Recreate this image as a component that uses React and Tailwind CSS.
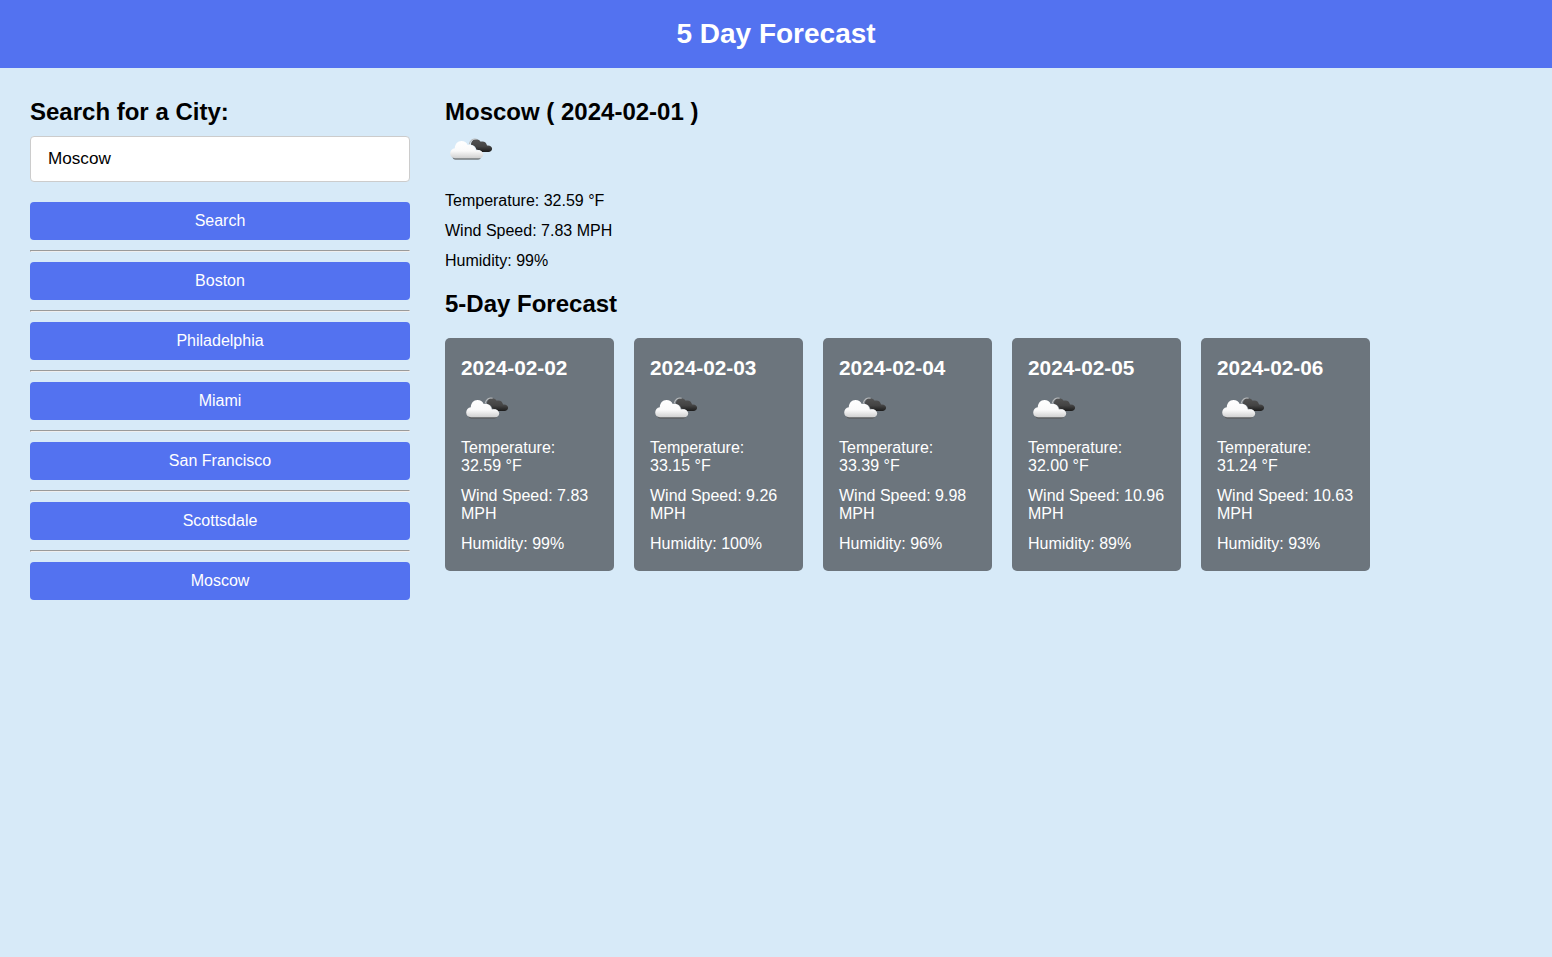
import React from "react";

const cities = ["Boston", "Philadelphia", "Miami", "San Francisco", "Scottsdale", "Moscow"];

const days = [
  { date: "2024-02-02", temp: "32.59", wind: "7.83", humidity: "99" },
  { date: "2024-02-03", temp: "33.15", wind: "9.26", humidity: "100" },
  { date: "2024-02-04", temp: "33.39", wind: "9.98", humidity: "96" },
  { date: "2024-02-05", temp: "32.00", wind: "10.96", humidity: "89" },
  { date: "2024-02-06", temp: "31.24", wind: "10.63", humidity: "93" },
];

function CloudIcon({ id }) {
  const front =
    "M10 34.3C7.2 34.3 5.2 32.4 5.2 29.6C5.2 26.9 7 24.7 9.8 24.3C9.8 20.1 12.6 17 16.4 17C19.4 17 21.6 18.6 22.7 20.9C27 20 30.2 22.4 30.9 26.4C35.2 25.4 38.2 27.6 38.2 30.6C38.2 32.8 36.4 34.3 34.2 34.3Z";
  return (
    <svg viewBox="0 0 50 50" className="block size-[50px]" aria-hidden="true">
      <defs>
        <linearGradient id={`${id}-front`} x1="0" y1="17" x2="0" y2="35" gradientUnits="userSpaceOnUse">
          <stop offset="0" stopColor="#ffffff" />
          <stop offset="0.55" stopColor="#fafafa" />
          <stop offset="1" stopColor="#cccccc" />
        </linearGradient>
        <linearGradient id={`${id}-back`} x1="0" y1="14" x2="0" y2="28" gradientUnits="userSpaceOnUse">
          <stop offset="0" stopColor="#555555" />
          <stop offset="0.6" stopColor="#444444" />
          <stop offset="1" stopColor="#1c1c1c" />
        </linearGradient>
      </defs>
      <path
        d="M26 20.8C26 17.3 28.3 15.2 31 15.2C33.2 15.2 34.9 16.1 35.7 17.7C39 16.9 41.6 18.6 42 21.6C45 21.2 47.1 22.6 47.1 24.8C47.1 26.8 45.5 28 43.4 28H37C35.5 26.3 33.5 25.5 31.5 25.7C30.7 22.9 28.8 21.1 26 20.8Z"
        fill={`url(#${id}-back)`}
      />
      <path d="M24.4 20.1C24.9 16.5 28 14.3 31.6 15.3" fill="none" stroke="#b9bbbc" strokeWidth="1.1" />
      <path d="M7.5 32.5H36C36 34.6 34.5 35.7 33 35.7H10.6C8.9 35.7 7.5 34.6 7.5 32.5Z" fill="#555555" fillOpacity="0.75" />
      <path d={front} fill={`url(#${id}-front)`} />
    </svg>
  );
}

function ActionButton({ children }) {
  return (
    <button type="button" className="block h-[38px] w-full rounded bg-[#5372f0] text-center leading-[18px] text-white">
      {children}
    </button>
  );
}

function ForecastCard({ day }) {
  return (
    <li className="h-[233px] w-[169px] rounded-[5px] bg-[#6c757d] px-4 pt-[18px] text-white">
      <h3 className="text-[20.8px] leading-6 font-bold">{day.date}</h3>
      <div className="mt-[3px]">
        <CloudIcon id={day.date} />
      </div>
      <div className="mt-1.5 flex flex-col gap-3 leading-[18px]">
        <p>Temperature: {day.temp} °F</p>
        <p>Wind Speed: {day.wind} MPH</p>
        <p>Humidity: {day.humidity}%</p>
      </div>
    </li>
  );
}

export default function App() {
  return (
    <div className="min-h-screen bg-[#d7eaf8] font-['Liberation_Sans',Arial,sans-serif] text-base text-black">
      <header className="bg-[#5372f0] py-[18px] text-center">
        <h1 className="text-[28px] leading-8 font-bold text-white">5 Day Forecast</h1>
      </header>
      <main className="flex gap-[35px] p-[30px]">
        <section className="w-[380px] shrink-0">
          <h2 className="text-2xl leading-7 font-bold">Search for a City:</h2>
          <input
            type="text"
            defaultValue="Moscow"
            aria-label="City"
            className="mt-2.5 mb-5 block h-[46px] w-full rounded border border-[#cccccc] bg-white px-[17px] text-[17.12px] outline-none"
          />
          <ActionButton>Search</ActionButton>
          {cities.map((city) => (
            <React.Fragment key={city}>
              <hr className="my-2.5 h-0.5 border border-t-[#9a9a9a] border-r-[#eeeeee] border-b-[#eeeeee] border-l-[#9a9a9a]" />
              <ActionButton>{city}</ActionButton>
            </React.Fragment>
          ))}
        </section>
        <section className="grow">
          <h2 className="text-2xl leading-7 font-bold">Moscow ( 2024-02-01 )</h2>
          <div className="-mt-0.5">
            <CloudIcon id="current" />
          </div>
          <div className="mt-[18px] flex flex-col gap-3 leading-[18px]">
            <p>Temperature: 32.59 °F</p>
            <p>Wind Speed: 7.83 MPH</p>
            <p>Humidity: 99%</p>
          </div>
          <h2 className="mt-5 text-2xl leading-7 font-bold">5-Day Forecast</h2>
          <ul className="mt-5 flex gap-5">
            {days.map((day) => (
              <ForecastCard key={day.date} day={day} />
            ))}
          </ul>
        </section>
      </main>
    </div>
  );
}
